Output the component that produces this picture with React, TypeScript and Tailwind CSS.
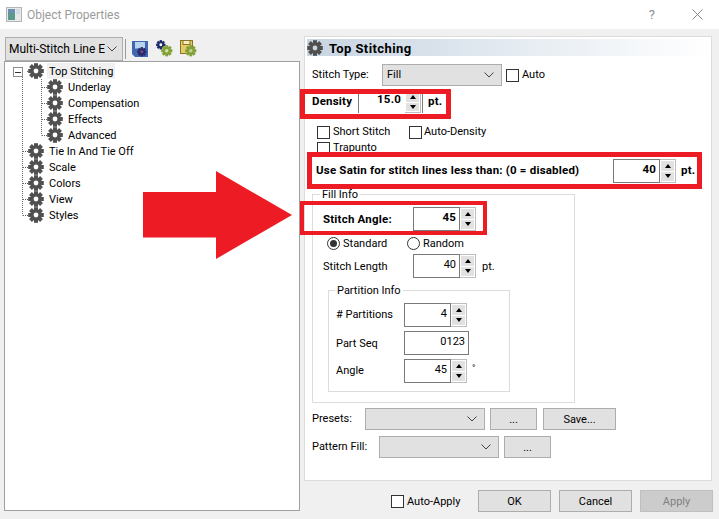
import React from 'react';

const FONT = "font-['Roboto',sans-serif]";
const BOLD = 'font-bold text-[11.5px] tracking-[0.2px]';

// eight-tooth gear, shared by the tree, the page header and the toolbar icons
const GearShape = ({ x = 0, y = 0, s = 1, color = '#505050', hole = '#ffffff' }: { x?: number; y?: number; s?: number; color?: string; hole?: string }) => (
  <g transform={`translate(${x} ${y}) scale(${s})`}>
    {[0, 45, 90, 135].map((a) => (
      <rect key={a} x="6" y="0.2" width="4" height="15.6" fill={color} transform={`rotate(${a} 8 8)`} />
    ))}
    <circle cx="8" cy="8" r="5.6" fill={color} />
    <circle cx="8" cy="8" r="2.4" fill={hole} />
  </g>
);

const Gear = ({ hole = '#ffffff' }: { hole?: string }) => (
  <svg width="16" height="16" viewBox="0 0 16 16" className="shrink-0">
    <GearShape hole={hole} />
  </svg>
);

const Chevron = () => (
  <svg width="10" height="6" viewBox="0 0 10 6" className="shrink-0">
    <path d="M0.5 0.5 L5 5 L9.5 0.5" fill="none" stroke="#444" strokeWidth="1" />
  </svg>
);

const Combo = ({ width, value = '' }: { width: string; value?: string }) => (
  <div className={`${width} h-[22px] shrink-0 flex items-center justify-between pl-1 pr-[7px] bg-[#e1e1e1] border border-[#adadad] text-black`}>
    <span>{value}</span>
    <Chevron />
  </div>
);

const Check = ({ className = '' }: { className?: string }) => (
  <span className={`block w-[13px] h-[13px] shrink-0 bg-white border border-[#333333] ${className}`} />
);

const Spin = () => (
  <div className="w-4 shrink-0 flex flex-col gap-px bg-white border border-[#bdbdbd] border-l-0 p-px">
    <div className="flex-1 bg-[#e1e1e1] flex items-center justify-center">
      <span className="w-0 h-0 border-x-[3.5px] border-x-transparent border-b-[4px] border-b-black" />
    </div>
    <div className="flex-1 bg-[#e1e1e1] flex items-center justify-center">
      <span className="w-0 h-0 border-x-[3.5px] border-x-transparent border-t-[4px] border-t-black" />
    </div>
  </div>
);

const SpinBox = ({ value, bold = false, noSpin = false, width = 'w-[47px]' }: { value: string; bold?: boolean; noSpin?: boolean; width?: string }) => (
  <div className="flex h-6 shrink-0">
    <div className={`${width} bg-white border border-[#7a7a7a] flex items-center justify-end pr-[3px] pb-[2px] text-black ${bold ? BOLD : ''}`}>
      {value}
    </div>
    {!noSpin && <Spin />}
  </div>
);

const PushButton = ({ label, width = 'w-[47px]', disabled = false, margin = '' }: { label: string; width?: string; disabled?: boolean; margin?: string }) => (
  <div className={`${width} ${margin} h-[22px] shrink-0 flex items-center justify-center pt-[2px] border ${disabled ? 'bg-[#cccccc] border-[#bfbfbf] text-[#7f7f7f]' : 'bg-[#e1e1e1] border-[#adadad] text-black'}`}>
    {label}
  </div>
);

const TreeRow = ({ label, child = false, selected = false }: { label: string; child?: boolean; selected?: boolean }) => (
  <div className={`h-4 flex items-center ${child ? 'pl-[42px]' : 'pl-[23px]'}`}>
    <Gear />
    <span className={`ml-[3px] px-[2px] h-4 leading-[17px] text-black ${selected ? 'bg-[#f0f0f0]' : ''}`}>{label}</span>
  </div>
);

const TreeLines = () => (
  <svg width="60" height="170" className="absolute left-0 top-0" fill="none" stroke="#666" strokeDasharray="1 1">
    <path d="M17.5 15 V153.5" />
    <path d="M22 9.5 H28" />
    <path d="M36.5 17 V73.5" />
    <path d="M37 25.5 H47 M37 41.5 H47 M37 57.5 H47 M37 73.5 H47" />
    <path d="M18 89.5 H28 M18 105.5 H28 M18 121.5 H28 M18 137.5 H28 M18 153.5 H28" />
  </svg>
);

const RedBox = ({ className }: { className: string }) => (
  <div className={`absolute border-[#ed1c24] ${className}`} />
);

export default function App() {
  return (
    <div className={`${FONT} relative w-[719px] h-[519px] overflow-hidden bg-[#f0f0f0] flex flex-col text-[11px]`}>
      {/* title bar */}
      <div className="h-[29px] shrink-0 bg-white flex items-center pl-[6px] pr-[16px]">
        <svg width="16" height="15" viewBox="0 0 16 15" className="shrink-0">
          <rect x="0.5" y="0.5" width="15" height="14" fill="#e8e8e8" stroke="#b5b5b5" />
          <rect x="2" y="2" width="7" height="11" fill="#5a9a8a" />
          <rect x="2" y="2" width="7" height="4" fill="#6a8fb0" />
          <rect x="10" y="2" width="4" height="5" fill="#d4dde4" />
        </svg>
        <span className="ml-[5px] text-[12px] text-[#9b9b9b]">Object Properties</span>
        <span className="ml-auto text-[13px] text-[#8c8c8c] mr-[37px]">?</span>
        <svg width="11" height="11" viewBox="0 0 11 11" className="shrink-0">
          <path d="M0.5 0.5 L10.5 10.5 M10.5 0.5 L0.5 10.5" stroke="#8a8a8a" strokeWidth="1" />
        </svg>
      </div>

      {/* main area */}
      <div className="flex flex-1 min-h-0 pl-[4px] pt-[7px] pr-[7px]">
        <div className="w-[296px] shrink-0 flex flex-col h-[475px]">
          <div className="h-[25px] shrink-0 flex items-center pl-px">
            <div className="w-[118px] h-[24px] flex items-center justify-between pl-[3px] pr-[5px] bg-[#e1e1e1] border border-[#adadad] text-[12px] text-black">
              <span className="whitespace-nowrap">Multi-Stitch Line E</span>
              <Chevron />
            </div>
            <div className="ml-[2px] w-px h-[20px] bg-[#9a9a9a]" />
            <svg width="16" height="16" viewBox="0 0 16 16" className="ml-[6px]">
              <path d="M0 0 H16 V16 H3 L0 13 Z" fill="#3f68b0" />
              <rect x="3" y="1" width="10" height="6.5" fill="#b8d4ec" />
              <GearShape x={5} y={6} s={0.6} color="#2b2b6b" hole="#7a4a8a" />
            </svg>
            <svg width="18" height="17" viewBox="0 0 18 17" className="ml-[7px]">
              <GearShape x={1} y={0} s={0.6} color="#1d2a6b" />
              <GearShape x={6} y={5} s={0.72} color="#83a13a" hole="#d9e3a8" />
            </svg>
            <svg width="17" height="17" viewBox="0 0 17 17" className="ml-[7px]">
              <rect x="0.5" y="0.5" width="12" height="13" fill="#e6cc68" stroke="#8a7428" />
              <rect x="3" y="0.5" width="7" height="4" fill="#f5ecc0" stroke="#8a7428" />
              <GearShape x={5} y={5} s={0.72} color="#83a13a" hole="#c5d48a" />
            </svg>
          </div>
          <div className="relative flex-1 bg-white border border-[#a0a0a0] pt-[1px]">
            <TreeLines />
            <div className="absolute left-[8px] top-[5px] w-[10px] h-[10px] bg-white border border-[#8c8c8c] flex items-center justify-center">
              <span className="w-[6px] h-px bg-[#333]" />
            </div>
            <div className="relative">
              <TreeRow label="Top Stitching" selected />
              <TreeRow label="Underlay" child />
              <TreeRow label="Compensation" child />
              <TreeRow label="Effects" child />
              <TreeRow label="Advanced" child />
              <TreeRow label="Tie In And Tie Off" />
              <TreeRow label="Scale" />
              <TreeRow label="Colors" />
              <TreeRow label="View" />
              <TreeRow label="Styles" />
            </div>
          </div>
        </div>

        {/* property page */}
        <div className="ml-[4px] w-[408px] h-[445px] shrink-0 bg-white border border-[#dcdcdc] px-[2px] pt-[2px] flex flex-col text-black">
          <div className="h-[17px] shrink-0 flex items-center bg-gradient-to-r from-[#c8d5e2] to-white">
            <Gear hole="#c8d5e2" />
            <span className="ml-[6px] pt-[2px] text-[13px] font-bold leading-none tracking-[0.4px]">Top Stitching</span>
          </div>

          <div className="mt-[8px] h-[22px] flex items-center pl-[5px]">
            <span className="w-[70px]">Stitch Type:</span>
            <Combo width="w-[120px]" value="Fill" />
            <Check className="ml-[4px]" />
            <span className="ml-[3px]">Auto</span>
          </div>

          <div className={`mt-[5px] h-[22px] flex items-center pl-[5px] ${BOLD}`}>
            <span className="w-[47px] h-full flex items-center border-r border-[#7a7a7a]">Density</span>
            <div className="w-[42px] h-full flex items-center justify-end pb-1">15.0</div>
            <div className="ml-[4px] flex h-[22px]"><Spin /></div>
            <span className="ml-[1px] h-full w-px bg-[#7a7a7a]" />
            <span className="ml-[5px]">pt.</span>
          </div>

          <div className="mt-[12px] h-[14px] flex items-center pl-[10px]">
            <Check />
            <span className="ml-[3px] w-[76px]">Short Stitch</span>
            <Check />
            <span className="ml-[2px]">Auto-Density</span>
          </div>
          <div className="mt-[2px] h-[14px] flex items-center pl-[10px]">
            <Check />
            <span className="ml-[3px]">Trapunto</span>
          </div>

          <div className={`mt-[4px] h-[24px] flex items-center pl-[9px] ${BOLD}`}>
            <span className="w-[297px]">Use Satin for stitch lines less than: (0 = disabled)</span>
            <SpinBox value="40" bold />
            <span className="ml-[5px]">pt.</span>
          </div>

          {/* fill info group */}
          <div className="relative mt-[11px] ml-[5px] w-[263px] h-[209px] shrink-0 border border-[#dcdcdc] pl-[10px]">
            <span className="absolute left-[7px] -top-[7px] bg-white px-[2px] leading-[14px]">Fill Info</span>
            <div className={`mt-[12px] h-6 flex items-center ${BOLD}`}>
              <span className="w-[90px] pt-[2px]">Stitch Angle:</span>
              <SpinBox value="45" bold />
            </div>
            <div className="mt-[5px] h-[14px] flex items-center pl-[4px]">
              <span className="w-[13px] h-[13px] rounded-full bg-white border border-[#333] flex items-center justify-center">
                <span className="w-[7px] h-[7px] rounded-full bg-[#333]" />
              </span>
              <span className="ml-[3px] w-[64px] pt-[2px]">Standard</span>
              <span className="w-[13px] h-[13px] rounded-full bg-white border border-[#333]" />
              <span className="ml-[3px] pt-[2px]">Random</span>
            </div>
            <div className="mt-[4px] h-6 flex items-center">
              <span className="w-[90px] pt-[2px]">Stitch Length</span>
              <SpinBox value="40" />
              <span className="ml-[6px] pt-[2px]">pt.</span>
            </div>

            {/* partition info group */}
            <div className="relative mt-[12px] ml-[5px] w-[182px] h-[102px] border border-[#dcdcdc] pl-[7px]">
              <span className="absolute left-[6px] -top-[7px] bg-white px-[2px] leading-[14px]">Partition Info</span>
              <div className="mt-[12px] h-6 flex items-center">
                <span className="w-[68px]"># Partitions</span>
                <SpinBox value="4" />
              </div>
              <div className="mt-[4px] h-6 flex items-center">
                <span className="w-[68px] pt-[2px]">Part Seq</span>
                <SpinBox value="0123" noSpin width="w-[65px]" />
              </div>
              <div className="mt-[4px] h-6 flex items-center">
                <span className="w-[68px]">Angle</span>
                <SpinBox value="45" />
                <span className="ml-[5px] text-[9px] -mt-1">°</span>
              </div>
            </div>
          </div>

          <div className="mt-[5px] h-[22px] flex items-center pl-[5px]">
            <span className="w-[53px]">Presets:</span>
            <Combo width="w-[120px]" />
            <PushButton label="..." margin="ml-[5px]" />
            <PushButton label="Save..." width="w-[73px]" margin="ml-[6px]" />
          </div>
          <div className="mt-[6px] h-[22px] flex items-center pl-[5px]">
            <span className="w-[67px]">Pattern Fill:</span>
            <Combo width="w-[120px]" />
            <PushButton label="..." margin="ml-[5px]" />
          </div>
        </div>
      </div>

      {/* bottom buttons */}
      <div className="absolute left-[391px] top-[490px] flex items-center text-black">
        <Check />
        <span className="ml-[3px] w-[71px] pt-[2px]">Auto-Apply</span>
        <PushButton label="OK" width="w-[73px]" />
        <PushButton label="Cancel" width="w-[73px]" margin="ml-[8px]" />
        <PushButton label="Apply" width="w-[73px]" margin="ml-[8px]" disabled />
      </div>

      {/* red annotations drawn over the dialog */}
      <RedBox className="left-[300px] top-[89px] w-[151px] h-[30px] border-[5px]" />
      <RedBox className="left-[307px] top-[152px] w-[395px] h-[37px] border-[5px]" />
      <RedBox className="left-[300px] top-[201px] w-[187px] h-[34px] border-[4px]" />
      <svg width="719" height="519" className="absolute left-0 top-0 pointer-events-none">
        <path d="M143 192 H216 V171 L292 215 L216 259 V237.5 H143 Z" fill="#ed1c24" />
      </svg>
    </div>
  );
}
